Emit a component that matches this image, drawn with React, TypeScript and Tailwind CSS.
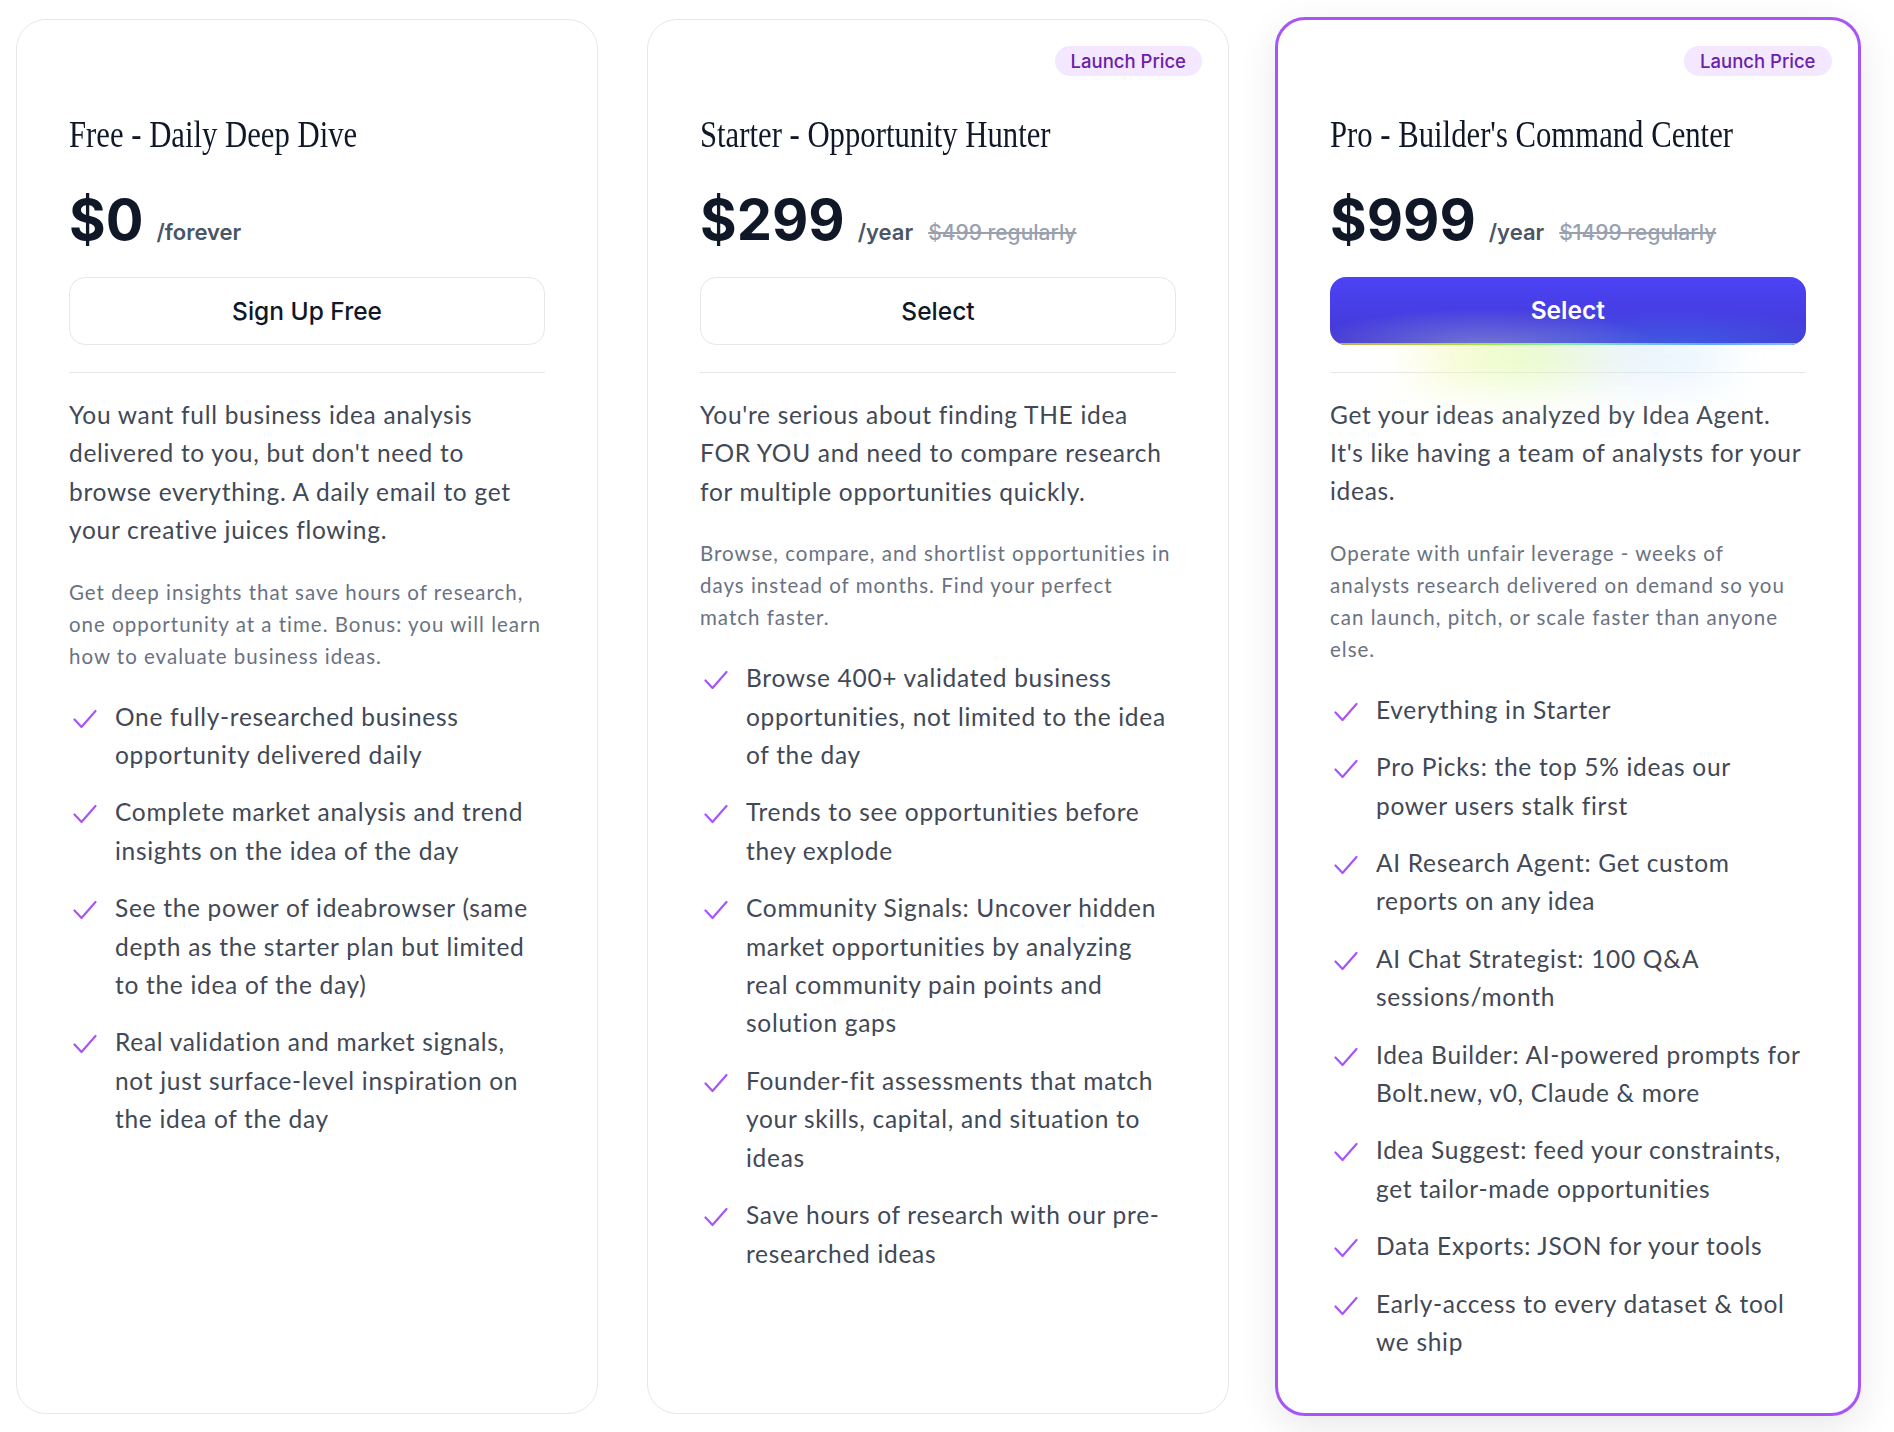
import { ReactNode } from "react";

type Plan = {
  name: string;
  price: string;
  period: string;
  regular?: string;
  cta: string;
  badge?: boolean;
  featured?: boolean;
  lead: string;
  detail: string;
  features: string[];
};

const plans: Plan[] = [
  {
    name: "Free - Daily Deep Dive",
    price: "$0",
    period: "/forever",
    cta: "Sign Up Free",
    lead: "You want full business idea analysis delivered to you, but don't need to browse everything. A daily email to get your creative juices flowing.",
    detail: "Get deep insights that save hours of research, one opportunity at a time. Bonus: you will learn how to evaluate business ideas.",
    features: [
      "One fully-researched business opportunity delivered daily",
      "Complete market analysis and trend insights on the idea of the day",
      "See the power of ideabrowser (same depth as the starter plan but limited to the idea of the day)",
      "Real validation and market signals, not just surface-level inspiration on the idea of the day",
    ],
  },
  {
    name: "Starter - Opportunity Hunter",
    price: "$299",
    period: "/year",
    regular: "$499 regularly",
    cta: "Select",
    badge: true,
    lead: "You're serious about finding THE idea FOR YOU and need to compare research for multiple opportunities quickly.",
    detail: "Browse, compare, and shortlist opportunities in days instead of months. Find your perfect match faster.",
    features: [
      "Browse 400+ validated business opportunities, not limited to the idea of the day",
      "Trends to see opportunities before they explode",
      "Community Signals: Uncover hidden market opportunities by analyzing real community pain points and solution gaps",
      "Founder-fit assessments that match your skills, capital, and situation to ideas",
      "Save hours of research with our pre-researched ideas",
    ],
  },
  {
    name: "Pro - Builder's Command Center",
    price: "$999",
    period: "/year",
    regular: "$1499 regularly",
    cta: "Select",
    badge: true,
    featured: true,
    lead: "Get your ideas analyzed by Idea Agent. It's like having a team of analysts for your ideas.",
    detail: "Operate with unfair leverage - weeks of analysts research delivered on demand so you can launch, pitch, or scale faster than anyone else.",
    features: [
      "Everything in Starter",
      "Pro Picks: the top 5% ideas our power users stalk first",
      "AI Research Agent: Get custom reports on any idea",
      "AI Chat Strategist: 100 Q&A sessions/month",
      "Idea Builder: AI-powered prompts for Bolt.new, v0, Claude & more",
      "Idea Suggest: feed your constraints, get tailor-made opportunities",
      "Data Exports: JSON for your tools",
      "Early-access to every dataset & tool we ship",
    ],
  },
];

function CheckMark() {
  return (
    <svg width="24" height="20" viewBox="0 0 24 20" fill="none" className="mt-[11px] ml-[4px] shrink-0">
      <path d="M1.5 10.5 8.5 18 22.5 2" stroke="#a855f7" strokeWidth="2.2" strokeLinecap="round" strokeLinejoin="round" />
    </svg>
  );
}

function CtaButton({ plan }: { plan: Plan }): ReactNode {
  if (!plan.featured) {
    return (
      <button className="h-[68px] w-full rounded-[16px] border border-gray-200 bg-white text-[24.5px] font-medium text-gray-900 font-['Inter',sans-serif]">
        {plan.cta}
      </button>
    );
  }
  return (
    <div className="relative">
      <div className="absolute left-[18%] right-[16%] top-full -mt-[10px] h-[44px] rounded-full bg-[linear-gradient(90deg,#fef9c3,#d9f99d_35%,#dbeafe_70%,#e0f2fe)] opacity-80 blur-xl" />
      <button className="relative h-[68px] w-full overflow-hidden rounded-[16px] bg-[linear-gradient(180deg,#4b43f6,#4338d2)] text-[24.5px] font-semibold text-white font-['Inter',sans-serif]">
        <span className="absolute inset-0 bg-[radial-gradient(ellipse_at_32%_100%,rgba(170,190,210,0.45),transparent_38%),radial-gradient(ellipse_at_72%_100%,rgba(59,130,246,0.45),transparent_38%)]" />
        <span className="absolute inset-x-0 bottom-0 h-[2px] bg-[linear-gradient(90deg,#c9a94a,#a3e635_30%,#86efac_50%,#60a5fa_80%,#93c5fd)]" />
        <span className="relative">{plan.cta}</span>
      </button>
    </div>
  );
}

function PlanCard({ plan }: { plan: Plan }) {
  const frame = plan.featured
    ? "-my-[2.5px] -ml-[3px] w-[585.5px] border-[3px] border-[#a855f7] shadow-[0_12px_40px_rgba(0,0,0,0.09)]"
    : "w-[582px] border border-gray-200";
  return (
    <div className={`relative shrink-0 rounded-[30px] bg-white px-[52px] pt-[93px] pb-[52px] ${frame}`}>
      {plan.badge && (
        <span className="absolute right-[26px] top-[26px] rounded-full bg-[#f3e8ff] px-[16px] py-[4px] text-[18.5px] leading-[22px] font-medium text-[#6b21a8] font-['Inter',sans-serif]">
          Launch Price
        </span>
      )}

      <h2 className="inline-block origin-left scale-x-[0.83] whitespace-nowrap text-[37px] leading-[44px] text-gray-900 font-['Liberation_Serif',serif]">
        {plan.name}
      </h2>

      <div className="mt-[33px] flex items-baseline gap-[13px] font-['Inter',sans-serif]">
        <span className="text-[56px] leading-[60px] font-bold text-gray-900">{plan.price}</span>
        <span className="text-[22px] font-semibold text-gray-600">{plan.period}</span>
        {plan.regular && (
          <span className="ml-[2px] text-[21px] font-medium text-gray-400 line-through">{plan.regular}</span>
        )}
      </div>

      <div className="mt-[27px]">
        <CtaButton plan={plan} />
      </div>

      <div className="mt-[27px] border-t border-gray-200" />

      <div className="font-['Lato',sans-serif]">
        <p className="mt-[23px] text-[24.5px] leading-[38.4px] tracking-[0.7px] text-[#414856]">{plan.lead}</p>
        <p className="mt-[26px] text-[20.5px] leading-[32px] tracking-[1px] text-gray-500">{plan.detail}</p>
        <ul className="mt-[26px] flex flex-col gap-[19px]">
          {plan.features.map((f) => (
            <li key={f} className="flex items-start gap-[18px]">
              <CheckMark />
              <span className="text-[24.5px] leading-[38.4px] tracking-[0.7px] text-[#414856]">{f}</span>
            </li>
          ))}
        </ul>
      </div>
    </div>
  );
}

export default function App() {
  return (
    <div className="min-h-[1432px] w-[1894px] bg-white">
      <div className="flex items-stretch gap-[49px] pl-[16px] pt-[19px]">
        {plans.map((p) => (
          <PlanCard key={p.name} plan={p} />
        ))}
      </div>
    </div>
  );
}
